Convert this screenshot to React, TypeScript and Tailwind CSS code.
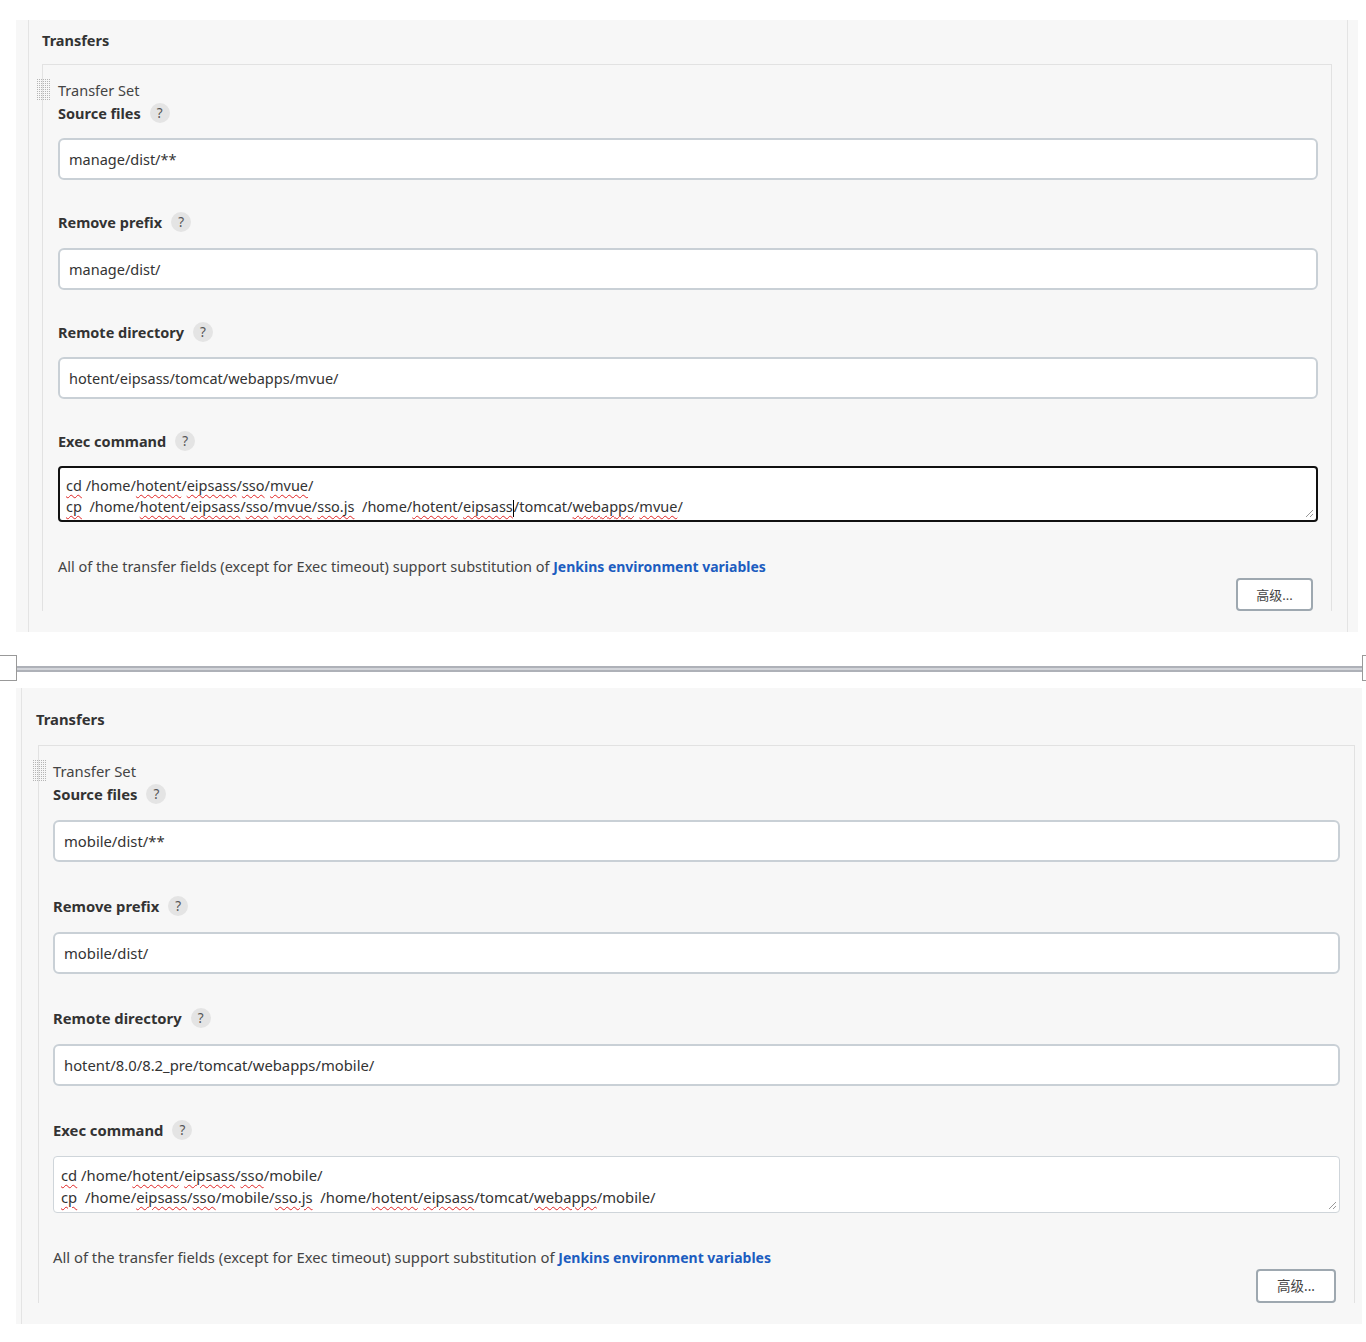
import React from "react";

type Line = { t: string; u?: boolean }[];

const Help = () => (
  <span className="ml-[9px] inline-flex h-[20px] w-[20px] items-center justify-center rounded-full bg-[#e4e4e4] text-[13.5px] font-normal text-[#555]">
    ?
  </span>
);

const Handle = () => (
  <svg width="13" height="22" className="block">
    <defs>
      <pattern id="dots" width="2" height="2" patternUnits="userSpaceOnUse">
        <rect width="1" height="1" fill="#b5b5b5" />
      </pattern>
    </defs>
    <rect width="13" height="22" fill="url(#dots)" />
  </svg>
);

const Resize = () => (
  <svg width="10" height="10" className="absolute bottom-[2px] right-[2px]">
    <line x1="9" y1="2" x2="2" y2="9" stroke="#999" strokeWidth="1" />
    <line x1="9" y1="6" x2="6" y2="9" stroke="#999" strokeWidth="1" />
  </svg>
);

const Cmd = ({ line, caretAfter }: { line: Line; caretAfter?: number }) => (
  <div className="whitespace-pre">
    {line.map((p, i) => (
      <React.Fragment key={i}>
        {p.u ? (
          <span className="underline decoration-wavy decoration-[#e02424] decoration-1 underline-offset-[3px]">
            {p.t}
          </span>
        ) : (
          <span>{p.t}</span>
        )}
        {caretAfter === i && <span className="inline-block h-[17px] w-px bg-black align-middle" />}
      </React.Fragment>
    ))}
  </div>
);

const topL1: Line = [
  { t: "cd", u: true }, { t: " /home/" }, { t: "hotent", u: true }, { t: "/" }, { t: "eipsass", u: true },
  { t: "/" }, { t: "sso", u: true }, { t: "/" }, { t: "mvue", u: true }, { t: "/" },
];
const topL2: Line = [
  { t: "cp", u: true }, { t: "  /home/" }, { t: "hotent", u: true }, { t: "/" }, { t: "eipsass", u: true },
  { t: "/" }, { t: "sso", u: true }, { t: "/" }, { t: "mvue", u: true }, { t: "/" }, { t: "sso.js", u: true },
  { t: "  /home/" }, { t: "hotent", u: true }, { t: "/" }, { t: "eipsass", u: true }, { t: "/tomcat/" },
  { t: "webapps", u: true }, { t: "/" }, { t: "mvue", u: true }, { t: "/" },
];
const botL1: Line = [
  { t: "cd", u: true }, { t: " /home/" }, { t: "hotent", u: true }, { t: "/" }, { t: "eipsass", u: true },
  { t: "/" }, { t: "sso", u: true }, { t: "/mobile/" },
];
const botL2: Line = [
  { t: "cp", u: true }, { t: "  /home/" }, { t: "eipsass", u: true }, { t: "/" }, { t: "sso", u: true },
  { t: "/mobile/" }, { t: "sso.js", u: true }, { t: "  /home/" }, { t: "hotent", u: true }, { t: "/" },
  { t: "eipsass", u: true }, { t: "/tomcat/" }, { t: "webapps", u: true }, { t: "/mobile/" },
];

const Input = ({ value }: { value: string }) => (
  <div className="flex h-[42px] items-center rounded-[6px] border-2 border-[#c9d0d6] bg-white pl-[9px] text-[#333]">
    {value}
  </div>
);

const Label = ({ text }: { text: string }) => (
  <div className="flex h-[20px] items-center font-bold text-[#333]">
    {text}
    <Help />
  </div>
);

function TopPanel() {
  return (
    <div className="ml-[16px] w-[1342px] bg-[#f7f7f7] text-[14.5px] leading-[20px]">
      <div className="ml-[12px] mr-[10px] border-l border-r border-[#e4e4e4] pl-[13px] pr-[15px] pt-[10px] pb-[21px]">
        <div className="font-bold text-[#333]">Transfers</div>
        <div className="mt-[14px] border-l border-r border-t border-[#e2e2e2] pl-[14px] pr-[13px]">
          <div className="relative pl-px pt-[15px]">
            <div className="absolute left-[-20px] top-[14px]">
              <Handle />
            </div>
            <div className="text-[#444]">Transfer Set</div>
            <div className="mt-[3px]">
              <Label text="Source files" />
            </div>
            <div className="mt-[15px]">
              <Input value="manage/dist/**" />
            </div>
            <div className="mt-[32px]">
              <Label text="Remove prefix" />
            </div>
            <div className="mt-[16px]">
              <Input value="manage/dist/" />
            </div>
            <div className="mt-[32px]">
              <Label text="Remote directory" />
            </div>
            <div className="mt-[15px]">
              <Input value="hotent/eipsass/tomcat/webapps/mvue/" />
            </div>
            <div className="mt-[32px]">
              <Label text="Exec command" />
            </div>
            <div className="relative mt-[15px] h-[56px] rounded-[4px] border-2 border-[#111] bg-white pl-[6px] pt-[7px] leading-[21px] text-[#333]">
              <Cmd line={topL1} />
              <Cmd line={topL2} caretAfter={14} />
              <Resize />
            </div>
            <div className="mt-[34px] text-[#444]">
              All of the transfer fields (except for Exec timeout) support substitution of{" "}
              <span className="text-[14px] font-bold text-[#1c5dc0]">Jenkins environment variables</span>
            </div>
            <div className="mt-px flex justify-end pr-[5px]">
              <div className="flex h-[33px] w-[77px] items-center justify-center rounded-[4px] border-2 border-[#9ea8b0] bg-white text-[13px] text-[#444]">
                高级...
              </div>
            </div>
          </div>
        </div>
      </div>
    </div>
  );
}

function BottomPanel() {
  return (
    <div className="ml-[16px] w-[1346px] bg-[#f7f7f7] text-[14.8px] leading-[20px]">
      <div className="ml-[5px] mr-[7px] border-l border-[#e4e4e4] pl-[14px] pt-[21px] pb-[21px]">
        <div className="font-bold text-[#333]">Transfers</div>
        <div className="ml-[2px] mt-[16px] border-l border-r border-t border-[#e2e2e2] pl-[14px] pr-[14px]">
          <div className="relative pt-[15px]">
            <div className="absolute left-[-20px] top-[14px]">
              <Handle />
            </div>
            <div className="text-[#444]">Transfer Set</div>
            <div className="mt-[3px]">
              <Label text="Source files" />
            </div>
            <div className="mt-[16px]">
              <Input value="mobile/dist/**" />
            </div>
            <div className="mt-[34px]">
              <Label text="Remove prefix" />
            </div>
            <div className="mt-[16px]">
              <Input value="mobile/dist/" />
            </div>
            <div className="mt-[34px]">
              <Label text="Remote directory" />
            </div>
            <div className="mt-[16px]">
              <Input value="hotent/8.0/8.2_pre/tomcat/webapps/mobile/" />
            </div>
            <div className="mt-[34px]">
              <Label text="Exec command" />
            </div>
            <div className="relative mt-[16px] h-[57px] rounded-[4px] border border-[#cfd5da] bg-white pl-[7px] pt-[7px] leading-[22px] text-[#333]">
              <Cmd line={botL1} />
              <Cmd line={botL2} />
              <Resize />
            </div>
            <div className="mt-[34px] text-[#444]">
              All of the transfer fields (except for Exec timeout) support substitution of{" "}
              <span className="text-[14px] font-bold text-[#1c5dc0]">Jenkins environment variables</span>
            </div>
            <div className="mt-px flex justify-end pr-[4px]">
              <div className="flex h-[34px] w-[80px] items-center justify-center rounded-[4px] border-2 border-[#9ea8b0] bg-white text-[13.5px] text-[#444]">
                高级...
              </div>
            </div>
          </div>
        </div>
      </div>
    </div>
  );
}

export default function App() {
  return (
    <div
      className="min-h-[1342px] w-[1366px] bg-white pt-[20px]"
      style={{ fontFamily: "'Noto Sans', 'Noto Sans CJK SC', sans-serif" }}
    >
      <TopPanel />
      <div className="flex h-[56px] items-start">
        <div className="mt-[23px] h-[26px] w-[17px] border-y border-r border-[#999]" />
        <div className="mt-[34px] h-[6px] flex-1 border-y-2 border-[#aeb1b8] bg-[#d3d5da]" />
        <div className="mt-[23px] h-[26px] w-[4px] border-y border-l border-[#999]" />
      </div>
      <BottomPanel />
    </div>
  );
}
